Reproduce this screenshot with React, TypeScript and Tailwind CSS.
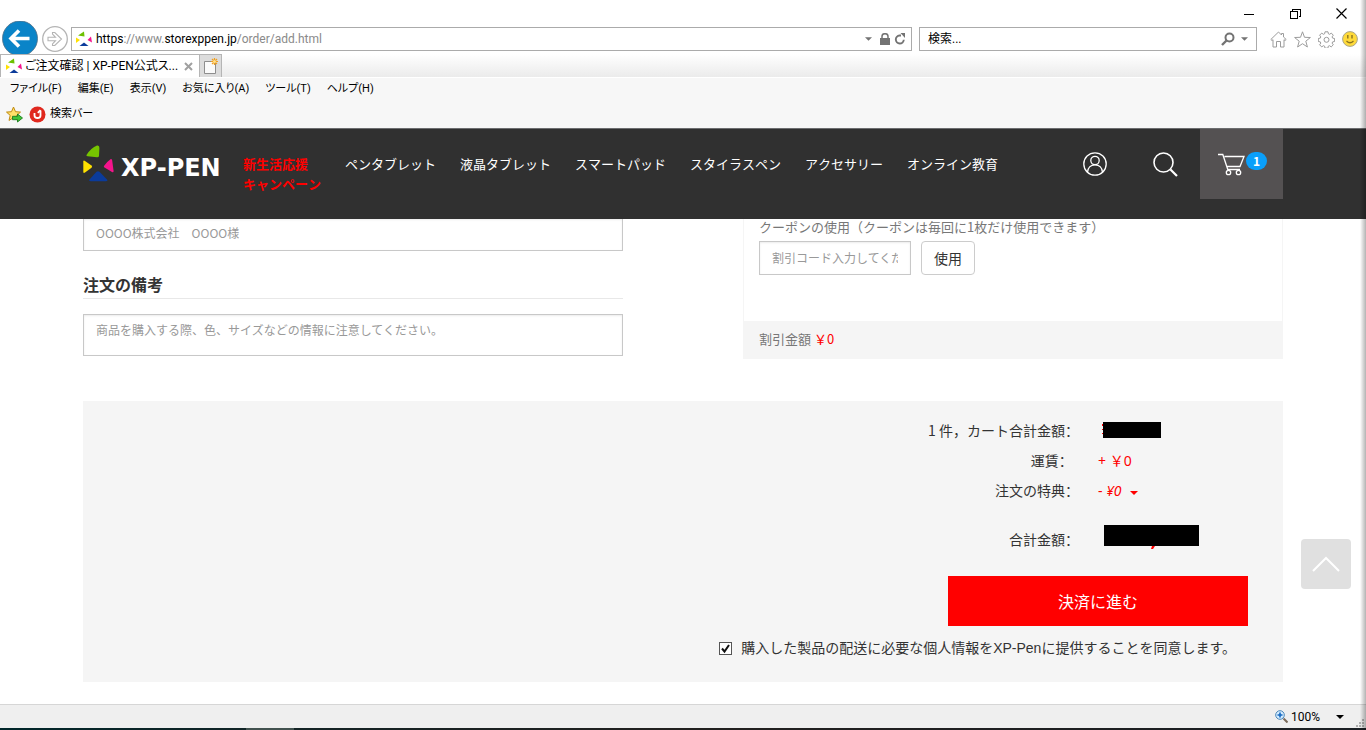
import type { ReactNode } from 'react';

const menuItems = ['ファイル(F)', '編集(E)', '表示(V)', 'お気に入り(A)', 'ツール(T)', 'ヘルプ(H)'];

const navItems = [
    'ペンタブレット',
    '液晶タブレット',
    'スマートパッド',
    'スタイラスペン',
    'アクセサリー',
    'オンライン教育',
];

function BrandMark({ className }: { className?: string }) {
    return (
        <svg viewBox="0 0 32 37" className={className} aria-hidden="true">
            <path d="M3.500 10 Q8 3 14 0.600 Q16.500 0 16.400 3 L16 11 Q15.700 12.500 14 12.300 L4.500 11.300 Q3 11 3.500 10Z" fill="#76c400" />
            <path d="M0.300 16.500 Q0.500 15 2 16 L8.500 20.500 Q9.800 21.600 8.500 22.700 L2 27.500 Q0.500 28.500 0.300 27Z" fill="#ffe100" />
            <path d="M21 21 Q24 16.500 27.500 14.200 Q28.800 13.800 29.200 15.500 L30.600 26 Q30.600 28 29 27 L21.500 22.600 Q20.500 22 21 21Z" fill="#f5148c" />
            <path d="M6.500 34.500 L13.500 26.800 Q15 25.600 16.500 26.800 L24 34.500 Q25.200 36.200 23 36.200 L7.500 36.200 Q5.500 36.200 6.500 34.500Z" fill="#0b3b9a" />
        </svg>
    );
}

function Favicon() {
    return (
        <svg viewBox="0 0 16 16" className="h-4 w-4 shrink-0" aria-hidden="true">
            <path d="M2 4.500L8 .5l.5 5z" fill="#6cc000" />
            <path d="M0 6.500L4 9l-4 3z" fill="#ffe100" />
            <path d="M11.500 9L15 5.500l1 6z" fill="#f5148c" />
            <path d="M3.500 15L8 11.500l4.500 3.500z" fill="#0b3b9a" />
        </svg>
    );
}

function Caret({ className }: { className?: string }) {
    return (
        <svg viewBox="0 0 8 4" className={className} aria-hidden="true">
            <path d="M0 0h8L4 4z" fill="currentColor" />
        </svg>
    );
}

function WindowButton({ label, children }: { label: string; children: ReactNode }) {
    return (
        <button type="button" aria-label={label} className="flex h-full w-[46px] items-center justify-center text-black">
            <svg viewBox="0 0 11 11" className="h-[11px] w-[11px]" fill="none" stroke="currentColor" shapeRendering="crispEdges">
                {children}
            </svg>
        </button>
    );
}

function BrowserChrome() {
    return (
        <div className="shrink-0 border-b border-[#6c6d6f] bg-white font-['Roboto','Noto_Sans_CJK_JP',sans-serif] text-xs text-black">
            <div className="flex h-[27px] justify-end pr-0.5">
                <WindowButton label="最小化">
                    <path d="M0 6.500h10" />
                </WindowButton>
                <WindowButton label="元に戻す">
                    <path d="M.5 3.500h7v7h-7zM2.500 3.500v-2h8v7h-2" />
                </WindowButton>
                <WindowButton label="閉じる">
                    <path d="M.5.5l10 10M10.500.5l-10 10" shapeRendering="auto" strokeWidth="1.200" />
                </WindowButton>
            </div>

            <div className="flex h-6 items-center pr-2 pl-0.5">
                <button type="button" aria-label="戻る" className="h-9 w-9 shrink-0">
                    <svg viewBox="0 0 36 36" className="h-9 w-9">
                        <circle cx="18" cy="17.500" r="17.500" fill="#0a84c8" stroke="#4f6f86" strokeWidth=".8" />
                        <path d="M27.500 17.500H10M17 9.500l-8 8 8 8" fill="none" stroke="#fff" strokeWidth="3.600" />
                    </svg>
                </button>
                <button type="button" aria-label="進む" className="ml-1 h-[26px] w-[26px] shrink-0">
                    <svg viewBox="0 0 26 26" className="h-[26px] w-[26px]" fill="none" stroke="#b4b4b4">
                        <circle cx="13" cy="13" r="12.300" strokeWidth="1.300" />
                        <path d="M6 11.300h7.500L10.500 8V6.500h2.300l6.700 6.500-6.700 6.500h-2.300V18l3-3.300H6z" strokeWidth="1.100" />
                    </svg>
                </button>
                <div className="ml-[3px] flex h-6 flex-1 items-center border border-[#ababab] bg-white px-1 text-[#737373]">
                    <Favicon />
                    <div
                        role="textbox"
                        aria-label="アドレス"
                        contentEditable
                        suppressContentEditableWarning
                        className="ml-1 flex-1 text-[#8a8a8a] outline-none"
                    >
                        <span className="text-black">https</span>://www.<span className="text-black">storexppen.jp</span>/order/add.html
                    </div>
                    <button type="button" aria-label="履歴">
                        <Caret className="h-1 w-[7px]" />
                    </button>
                    <svg viewBox="0 0 10 12" className="ml-2 h-3 w-2.5" aria-hidden="true">
                        <path d="M0 5h10v7H0z" fill="#737373" />
                        <path d="M2 5.500V3.500a3 2.800 0 0 1 6 0v2" fill="none" stroke="#737373" strokeWidth="1.500" />
                    </svg>
                    <button type="button" aria-label="更新" className="mr-px ml-1">
                        <svg viewBox="0 0 12 12" className="h-3 w-3" fill="none" stroke="#737373" strokeWidth="1.900">
                            <path d="M7 2.500H5.500A4 4 0 1 0 9.800 6.800" />
                            <path d="M6.500 0l4.500 0v5z" fill="#737373" stroke="none" />
                        </svg>
                    </button>
                </div>
                <div className="ml-[7px] flex h-6 w-[338px] items-center border border-[#ababab] bg-white px-2 text-[#737373]">
                    <input aria-label="検索" placeholder="検索..." className="min-w-0 flex-1 outline-none placeholder:text-black" />
                    <button type="button" aria-label="検索する">
                        <svg viewBox="0 0 14 14" className="h-3.5 w-3.5" fill="none" stroke="#737373">
                            <circle cx="8.500" cy="5.500" r="4" strokeWidth="2" />
                            <path d="M5.500 8.500L1 13" strokeWidth="2.400" />
                        </svg>
                    </button>
                    <Caret className="ml-1.5 h-1 w-[7px]" />
                </div>
                <div className="ml-[13px] flex items-center gap-[7px] text-[#9c9c9c]">
                    <button type="button" aria-label="ホーム">
                        <svg viewBox="0 0 17 17" className="h-[17px] w-[17px]" fill="none" stroke="currentColor">
                            <path d="M8.500 1L.8 8.500l1.200 1 1-.8V16h3.500v-5.500h4V16H14V8.700l1 .8 1.200-1L13.500 6V2.500h-2V4z" />
                        </svg>
                    </button>
                    <button type="button" aria-label="お気に入り">
                        <svg viewBox="0 0 17 17" className="h-[17px] w-[17px]" fill="none" stroke="currentColor">
                            <path d="M8.500.8l2 5.500 5.900.2-4.600 3.700 1.600 5.800-4.900-3.300L3.600 16l1.600-5.800L.6 6.500l5.900-.2z" />
                        </svg>
                    </button>
                    <button type="button" aria-label="ツール">
                        <svg viewBox="0 0 17 17" className="h-[17px] w-[17px]" fill="none" stroke="currentColor">
                            <path d="M7 .8h3l.4 2 1.200.5 1.700-1.200 2 2.100-1.200 1.700.5 1.200 2 .4v3l-2 .4-.5 1.200 1.200 1.700-2.100 2.100-1.700-1.200-1.200.5-.4 2H7l-.4-2-1.200-.5-1.700 1.200-2.100-2.100 1.200-1.700-.5-1.200-2-.4v-3l2-.4.5-1.200-1.200-1.700 2.100-2.100 1.700 1.200 1.200-.5z" />
                            <circle cx="8.500" cy="8.800" r="2.500" />
                        </svg>
                    </button>
                    <button type="button" aria-label="フィードバック">
                        <svg viewBox="0 0 16 16" className="h-4 w-4">
                            <circle cx="8" cy="8" r="7.400" fill="#ffda3a" stroke="#a9a58c" />
                            <path d="M5.800 4v3.500M10 4v3.500" stroke="#8a7420" strokeWidth="1.400" />
                            <path d="M4.500 10q3.500 3.500 7 0" fill="none" stroke="#8a7420" strokeWidth="1.200" />
                        </svg>
                    </button>
                </div>
            </div>

            <div className="relative mt-[3px] flex h-[23px] bg-linear-to-b from-white to-[#ebebeb]">
                <div className="flex w-[200px] items-center border border-b-0 border-[#b5b5b5] bg-white pr-0.5 pl-[5px]">
                    <Favicon />
                    <span className="ml-[3px] flex-1 whitespace-nowrap [font-feature-settings:'palt']">ご注文確認 | XP-PEN公式ス...</span>
                    <button type="button" aria-label="タブを閉じる" className="p-1">
                        <svg viewBox="0 0 9 9" className="h-[9px] w-[9px]" stroke="#a0a0a0" strokeWidth="2">
                            <path d="M1 1l7 7M8 1L1 8" />
                        </svg>
                    </button>
                </div>
                <button type="button" aria-label="新しいタブ" className="flex w-[22px] items-center justify-center border border-b-0 border-l-0 border-[#b5b5b5] bg-[#dcdcdc]">
                    <svg viewBox="0 0 16 18" className="h-[18px] w-4">
                        <path d="M1.500 4.500h11v12h-11z" fill="#fafafa" stroke="#8d8d8d" />
                        <path d="M11.500 1v7M8 4.500h7M9 2l5 5M14 2L9 7" stroke="#f0a020" strokeWidth="1.200" />
                        <circle cx="11.500" cy="4.500" r="1.500" fill="#ffe08a" />
                    </svg>
                </button>
            </div>

            <div className="border-t border-white bg-[#f7f7f7] text-[11px] [font-feature-settings:'palt']">
                <div className="flex h-[22px] items-center gap-4 px-2.5">
                    {menuItems.map((item) => (
                        <button key={item} type="button">
                            {item}
                        </button>
                    ))}
                </div>
                <div className="flex h-7 items-center px-1.5">
                    <button type="button" aria-label="お気に入りバーに追加">
                        <svg viewBox="0 0 17 17" className="h-[17px] w-[17px]">
                            <path d="M7.500 1l2 4.700 5 .4-3.800 3.300 1.200 5-4.400-2.700L3 14.400l1.200-5L.5 6.100l5-.4z" fill="#ffe06a" stroke="#c08a10" />
                            <path d="M6.500 10.300h5V8l5 4-5 4v-2.300h-5z" fill="#3fc43a" stroke="#1c7c1e" strokeWidth=".9" />
                        </svg>
                    </button>
                    <button type="button" className="ml-1.5 flex items-center gap-1">
                        <svg viewBox="0 0 17 17" className="h-[17px] w-[17px]" aria-hidden="true">
                            <circle cx="8.500" cy="8.500" r="8" fill="#e0281e" />
                            <path d="M5.500 7v2.500q0 2.500 3 2.500t3-2.500V4.500M8.800 6.800l2.700-2.800" fill="none" stroke="#fff" strokeWidth="1.800" />
                        </svg>
                        検索バー
                    </button>
                </div>
            </div>
        </div>
    );
}

function SiteHeader() {
    return (
        <header className="relative z-10 h-[90px] shrink-0 bg-[#303030] text-white">
            <div className="mx-auto flex max-w-[1200px] items-start">
                <a href="#home" aria-label="XP-PEN" className="flex w-40 shrink-0 items-end pt-4">
                    <BrandMark className="h-[37px] w-8 shrink-0" />
                    <span className="ml-1.5 font-['DejaVu_Sans',sans-serif] text-2xl leading-7 font-bold whitespace-nowrap">XP-PEN</span>
                </a>
                <nav className="flex gap-6 pt-[25px] text-[13px] leading-5 whitespace-nowrap [font-kerning:none]">
                    <a href="#campaign" className="font-bold text-[#ff0000]">
                        新生活応援
                        <br />
                        キャンペーン
                    </a>
                    {navItems.map((item) => (
                        <a key={item} href="#products">
                            {item}
                        </a>
                    ))}
                </nav>
                <div className="ml-auto flex h-[70px]">
                    <button type="button" aria-label="アカウント" className="flex w-[70px] items-center justify-center">
                        <svg viewBox="0 0 24 24" className="h-6 w-6" fill="none" stroke="currentColor" strokeWidth="1.300">
                            <circle cx="12" cy="12" r="11.200" />
                            <circle cx="12" cy="8.500" r="4.200" />
                            <path d="M4.500 20.300C4.800 15.500 8 12.800 12 12.800s7.200 2.700 7.500 7.500" />
                        </svg>
                    </button>
                    <button type="button" aria-label="検索" className="flex w-[70px] items-center justify-center">
                        <svg viewBox="0 0 25 25" className="h-[25px] w-[25px]" fill="none" stroke="currentColor">
                            <circle cx="10.500" cy="10.500" r="9.500" strokeWidth="1.600" />
                            <path d="M17.500 17.500l6.500 6.500" strokeWidth="2.200" />
                        </svg>
                    </button>
                    <a href="#cart" aria-label="カート" className="flex w-[83px] items-start bg-[#545152] pt-[23px] pl-[18px]">
                        <svg viewBox="0 0 27 24" className="h-6 w-[27px]" fill="none" stroke="currentColor" strokeWidth="1.300">
                            <path d="M0 2.500h4.800L9.800 17.500h12.200M6.500 4.500h19.500L22 14.500H9" />
                            <circle cx="10.500" cy="20.500" r="2.200" />
                            <circle cx="20.500" cy="20.500" r="2.200" />
                        </svg>
                        <span className="ml-px h-[18px] w-[21px] rounded-full bg-[#0a9ffa] text-center text-xs leading-[18px] font-bold">1</span>
                    </a>
                </div>
            </div>
        </header>
    );
}

const fieldClass =
    'block border border-[#c8c8c8] bg-white px-3 text-xs text-[#555] shadow-[inset_0_1px_2px_rgba(0,0,0,0.08)] outline-none placeholder:text-[#999]';

function OrderForm() {
    return (
        <div className="grid grid-cols-2 gap-[120px]">
            <section>
                {/* top edge of this field is scrolled out of view */}
                <input aria-label="宛名" placeholder="OOOO株式会社　OOOO様" className={`h-8 w-full border-t-0 pb-1 ${fieldClass}`} />
                <h2 className="mt-[22px] border-b border-[#e8e8e8] pb-[3px] text-base leading-[22px] font-bold text-[#333]">
                    <label htmlFor="remarks">注文の備考</label>
                </h2>
                <textarea
                    id="remarks"
                    placeholder="商品を購入する際、色、サイズなどの情報に注意してください。"
                    className={`mt-[15px] h-[42px] w-full resize-none pt-[5px] leading-5 ${fieldClass}`}
                />
            </section>

            <section className="border-x border-[#f5f5f5] text-[13px] leading-5 text-[#777]">
                <div className="px-[15px] pb-[46px]">
                    <label htmlFor="coupon" className="block leading-4">
                        クーポンの使用（クーポンは毎回に1枚だけ使用できます）
                    </label>
                    <div className="mt-1.5 flex gap-2.5">
                        <input id="coupon" placeholder="割引コード入力してください" className={`h-[34px] w-[152px] pb-0.5 ${fieldClass}`} />
                        <button type="button" className="h-[34px] w-[54px] rounded border border-[#ccc] bg-white text-sm text-[#333]">
                            使用
                        </button>
                    </div>
                </div>
                <p className="bg-[#f5f5f5] px-[15px] pt-2 pb-2.5">
                    割引金額 <span className="text-[#ff0000]">￥0</span>
                </p>
            </section>
        </div>
    );
}

function SummaryRow({ label, children }: { label: string; children: ReactNode }) {
    return (
        <div className="flex h-[30px] justify-end gap-[19px] leading-7">
            <dt>{label}</dt>
            <dd className="w-[150px] font-['Noto_Sans','Noto_Sans_CJK_SC',sans-serif] leading-[30px] text-[#ff0000]">{children}</dd>
        </div>
    );
}

function OrderSummary() {
    return (
        <section className="mt-[42px] flex flex-col bg-[#f5f5f5] pt-[15px] pr-[35px] pb-6 text-sm text-[#333]">
            <dl>
                <SummaryRow label="1 件，カート合計金額：">
                    <svg viewBox="0 0 64 30" className="h-[30px] w-16" role="img" aria-label="非表示">
                        <path d="M4 8h2v2H4zM4 13h2v1H4zM4 17h2v1H4z" fill="#f00" />
                        <path d="M5 6h58v16H5z" />
                    </svg>
                </SummaryRow>
                <SummaryRow label={'運賃：\u00a0\u00a0'}>+ ￥0</SummaryRow>
                <SummaryRow label="注文の特典：">
                    <button type="button" className="flex items-center gap-2">
                        <span>
                            - <em>¥0</em>
                        </span>
                        <Caret className="mt-1 h-1 w-2" />
                    </button>
                </SummaryRow>
            </dl>
            <dl className="mt-[19px]">
                <SummaryRow label="合計金額：">
                    <svg viewBox="0 0 102 30" className="h-[30px] w-[102px]" role="img" aria-label="非表示">
                        <path d="M6 0h95v21H6z" />
                        <path d="M54 21h3l-2 3h-2z" fill="#f00" />
                    </svg>
                </SummaryRow>
            </dl>
            <button type="button" className="mt-[21px] h-[50px] w-[300px] self-end bg-[#ff0000] text-base text-white">
                決済に進む
            </button>
            <label className="mt-3 mr-3 flex items-center gap-[9px] self-end font-['Liberation_Sans','Noto_Sans_CJK_SC',sans-serif] leading-5">
                <span className="relative flex">
                    <input
                        type="checkbox"
                        defaultChecked
                        className="peer h-[13px] w-[13px] appearance-none border border-[#555] bg-white"
                    />
                    <svg viewBox="0 0 13 13" className="pointer-events-none absolute inset-0 hidden peer-checked:block" fill="none" stroke="#111" strokeWidth="2">
                        <path d="M3 6.500l2.500 3L10 3" />
                    </svg>
                </span>
                購入した製品の配送に必要な個人情報をXP-Penに提供することを同意します。
            </label>
        </section>
    );
}

function StatusBar() {
    return (
        <footer className="shrink-0 font-['Roboto','Noto_Sans_CJK_JP',sans-serif]">
            <div className="flex h-6 items-center justify-end border-t border-[#d6d6d6] bg-[#efefef] text-xs text-black">
                <svg viewBox="0 0 13 13" className="h-[13px] w-[13px]" fill="none" aria-hidden="true">
                    <circle cx="5" cy="5" r="4.300" fill="#d4ecff" stroke="#4a86b8" />
                    <path d="M5 2.500v5M2.500 5h5" stroke="#1668c0" strokeWidth="1.600" />
                    <path d="M8.500 8.500l4 4" stroke="#7a6a5a" strokeWidth="2" />
                </svg>
                <button type="button" className="ml-[3px] flex items-center gap-4">
                    100%
                    <Caret className="h-1 w-2" />
                </button>
                <svg viewBox="0 0 8 8" className="mt-3 mr-0.5 ml-3 h-2 w-2" fill="#b0b0b0" aria-hidden="true">
                    <path d="M6 0h2v2H6zM3 3h2v2H3zM6 3h2v2H6zM0 6h2v2H0zM3 6h2v2H3zM6 6h2v2H6z" />
                </svg>
            </div>
            <div className="flex h-0.5 bg-linear-to-r from-[#00262a] via-[#22201f] to-[#1b1f24]">
                <span className="ml-[18%] w-12 bg-[#42524f]" />
            </div>
        </footer>
    );
}

export default function App() {
    return (
        <div className="relative flex h-screen flex-col overflow-hidden bg-white font-['Noto_Sans_CJK_SC',sans-serif]">
            <BrowserChrome />
            <SiteHeader />
            <main className="relative min-h-0 flex-1 overflow-hidden">
                <div className="mx-auto max-w-[1200px]">
                    <OrderForm />
                    <OrderSummary />
                </div>
                <button
                    type="button"
                    aria-label="ページの先頭へ"
                    className="absolute right-[15px] bottom-[115px] flex h-[50px] w-[50px] items-center justify-center rounded bg-[#e0e0e0]"
                >
                    <svg viewBox="0 0 28 16" className="h-4 w-7" fill="none" stroke="#fff" strokeWidth="2">
                        <path d="M1 15L14 2l13 13" />
                    </svg>
                </button>
            </main>
            <StatusBar />
            <div className="pointer-events-none absolute inset-y-0 right-0 z-20 w-1.5 bg-linear-to-r from-transparent to-black/30" />
        </div>
    );
}
